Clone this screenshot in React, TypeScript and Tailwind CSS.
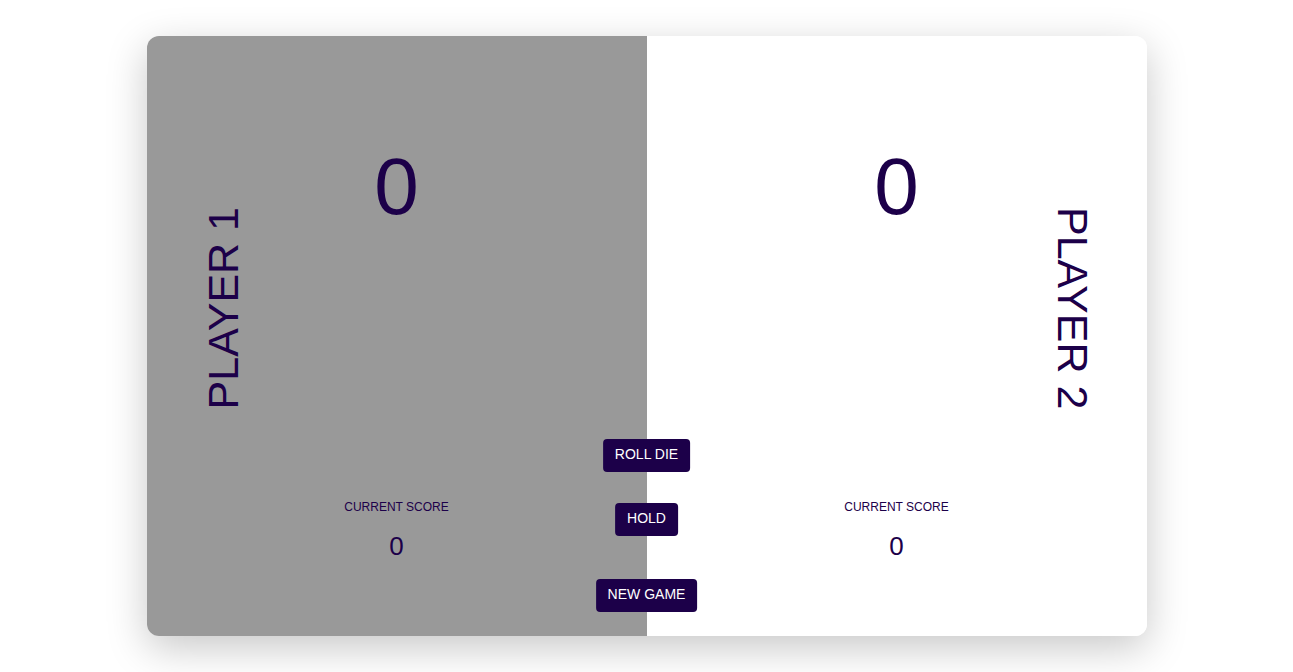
const ink = "text-[#1c0049]";

function Panel({
  name,
  active,
  side,
}: {
  name: string;
  active: boolean;
  side: "left" | "right";
}) {
  const label = (
    <div
      className={`flex items-start justify-center pt-[171px] ${side === "right" ? "pl-[6px]" : ""}`}
    >
      <h2
        className={`text-[43px] leading-none font-normal ${ink} [writing-mode:vertical-rl] ${
          side === "left" ? "rotate-180" : ""
        }`}
      >
        {name}
      </h2>
    </div>
  );

  return (
    <section
      className={`grid h-full grid-cols-[154px_1fr_154px] ${
        active ? "bg-[#999999]" : "bg-white"
      }`}
    >
      {side === "left" ? label : <div />}

      <div className="flex h-full flex-col items-center">
        <div className={`mt-[111px] text-[80px] leading-[80px] ${ink}`}>0</div>

        <div className="mt-auto mb-[75px] flex flex-col items-center">
          <p className={`text-[12px] leading-[14px] ${ink}`}>CURRENT SCORE</p>
          <p className={`mt-[17px] text-[26px] leading-[30px] ${ink}`}>0</p>
        </div>
      </div>

      {side === "right" ? label : <div />}
    </section>
  );
}

function Btn({ children, className = "" }: { children: string; className?: string }) {
  return (
    <button
      className={`h-[33px] rounded-[4px] bg-[#1c0049] px-3 pb-[3px] text-[14px] leading-4 text-white ${className}`}
    >
      {children}
    </button>
  );
}

export default function App() {
  return (
    <div className="min-h-[672px] bg-white pt-9 font-['Liberation_Sans',Arial,sans-serif]">
      <main className="relative mx-auto grid h-[600px] w-[1000px] grid-cols-2 overflow-hidden rounded-xl shadow-[0_12px_40px_rgba(0,0,0,0.22)]">
        <Panel name="PLAYER 1" active side="left" />
        <Panel name="PLAYER 2" active={false} side="right" />

        {/* controls sit over the seam between the two panels */}
        <div className="absolute top-[403px] left-1/2 flex -translate-x-1/2 flex-col items-center">
          <Btn>ROLL DIE</Btn>
          <Btn className="mt-[31px]">HOLD</Btn>
          <Btn className="mt-[43px]">NEW GAME</Btn>
        </div>
      </main>
    </div>
  );
}
